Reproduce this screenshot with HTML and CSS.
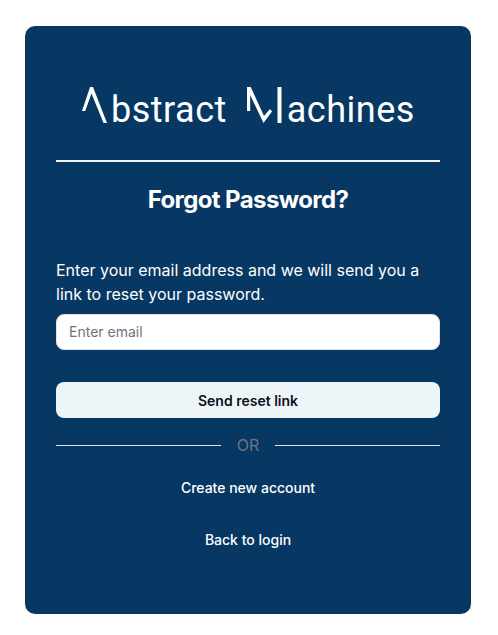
FILE: index.html
```html
<!DOCTYPE html>
<html>
  <head>
    <meta charset="UTF-8" />
    <meta name="viewport" content="width=device-width, initial-scale=1.0" />
    <title>Forgot Password</title>
    <link rel="stylesheet" href="styles.css">
  </head>
  <body>
    <div class="card">
      <div class="logo">
        <svg class="mark-a" width="27" height="36" viewBox="0 0 27 36">
          <path d="M0 24 L8 0 H11 L25 36 H21.5 L9.5 6.5 L3.2 24 Z" fill="#fff" />
        </svg>
        <span class="logo-text">bstract</span>
        <svg class="mark-m" width="36" height="36" viewBox="0 0 36 36">
          <path d="M0 0 H3.7 L17 29 L23 22 L25 24.5 L16.5 36 L3.2 8 V24 H0 Z" fill="#fff" />
          <rect x="30.5" y="0" width="4" height="36" fill="#fff" />
        </svg>
        <span class="logo-text">achines</span>
      </div>
      <hr class="rule" />
      <h1>Forgot Password?</h1>
      <p class="info">Enter your email address and we will send you a link to reset your password.</p>
      <input type="text" class="email" placeholder="Enter email" />
      <button class="send">Send reset link</button>
      <div class="or">
        <span class="or-line"></span>
        <span class="or-text">OR</span>
        <span class="or-line"></span>
      </div>
      <a class="link first" href="#">Create new account</a>
      <a class="link" href="#">Back to login</a>
    </div>
  </body>
</html>
```

FILE: styles.css
```css
* {
  box-sizing: border-box;
  margin: 0;
  padding: 0;
}

body {
  font-family: Inter, "Liberation Sans", sans-serif;
  background-color: #fff;
  height: 635px;
  padding: 26px 27px 21px 25px;
}

.card {
  background-color: #073763;
  border-radius: 10px;
  height: 588px;
  padding: 60px 31px 0;
  color: #fff;
  display: flex;
  flex-direction: column;
}

.logo {
  display: flex;
  align-items: flex-end;
  height: 38px;
  padding-left: 26px;
}

.logo-text {
  font-family: Roboto, sans-serif;
  font-weight: 400;
  font-size: 36px;
  letter-spacing: 0.5px;
  line-height: 28px;
  color: #fff;
}

.mark-a {
  flex: none;
  margin: 0 2px 1px 0;
}

.mark-m {
  flex: none;
  margin: 0 4px 1px 20px;
}

.rule {
  border: none;
  border-top: 2px solid #eef5f9;
  margin-top: 36px;
}

h1 {
  font-size: 24px;
  font-weight: 700;
  line-height: 30px;
  letter-spacing: -0.6px;
  text-align: center;
  margin-top: 23px;
}

.info {
  font-size: 16px;
  line-height: 24px;
  margin-top: 43px;
}

.email {
  width: 100%;
  height: 36px;
  margin-top: 8px;
  padding: 0 12px 2px;
  border: 1px solid #dee2e6;
  border-radius: 8px;
  background-color: #fff;
  font-family: Inter, sans-serif;
  font-size: 14px;
}

.email::placeholder {
  color: #6c757d;
}

.send {
  width: 100%;
  height: 36px;
  margin-top: 32px;
  border: none;
  border-radius: 8px;
  background-color: #eef5f9;
  color: #0b0f1a;
  font-family: Inter, sans-serif;
  font-size: 14px;
  font-weight: 600;
}

.or {
  display: flex;
  align-items: center;
  gap: 16px;
  margin-top: 16px;
}

.or-line {
  flex: 1;
  border-top: 1px solid #dee2e6;
}

.or-text {
  font-size: 16px;
  line-height: 22px;
  color: #6c757d;
}

.link {
  display: block;
  color: #fff;
  font-size: 14px;
  font-weight: 500;
  line-height: 20px;
  text-align: center;
  text-decoration: none;
  margin-top: 32px;
}

.link.first {
  margin-top: 22px;
}
```
